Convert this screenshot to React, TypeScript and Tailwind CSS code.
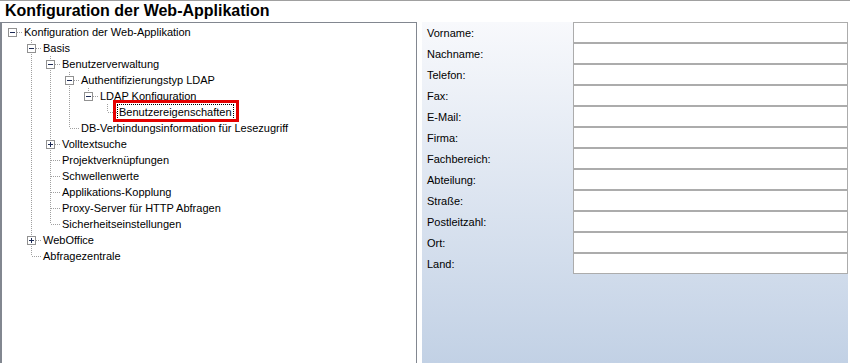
import React from "react";

type Node = { t: string; level: number; exp?: "-" | "+"; next: boolean; selected?: boolean };

const nodes: Node[] = [
  { t: "Konfiguration der Web-Applikation", level: 0, exp: "-", next: false },
  { t: "Basis", level: 1, exp: "-", next: true },
  { t: "Benutzerverwaltung", level: 2, exp: "-", next: true },
  { t: "Authentifizierungstyp LDAP", level: 3, exp: "-", next: true },
  { t: "LDAP Konfiguration", level: 4, exp: "-", next: false },
  { t: "Benutzereigenschaften", level: 5, next: false, selected: true },
  { t: "DB-Verbindungsinformation für Lesezugriff", level: 3, next: false },
  { t: "Volltextsuche", level: 2, exp: "+", next: true },
  { t: "Projektverknüpfungen", level: 2, next: true },
  { t: "Schwellenwerte", level: 2, next: true },
  { t: "Applikations-Kopplung", level: 2, next: true },
  { t: "Proxy-Server für HTTP Abfragen", level: 2, next: true },
  { t: "Sicherheitseinstellungen", level: 2, next: false },
  { t: "WebOffice", level: 1, exp: "+", next: true },
  { t: "Abfragezentrale", level: 1, next: false },
];

const fields = [
  "Vorname:",
  "Nachname:",
  "Telefon:",
  "Fax:",
  "E-Mail:",
  "Firma:",
  "Fachbereich:",
  "Abteilung:",
  "Straße:",
  "Postleitzahl:",
  "Ort:",
  "Land:",
];

const vDots =
  "bg-[repeating-linear-gradient(to_bottom,#a0a0a0_0px,#a0a0a0_1px,transparent_1px,transparent_2px)]";
const hDots =
  "bg-[repeating-linear-gradient(to_right,#a0a0a0_0px,#a0a0a0_1px,transparent_1px,transparent_2px)]";

function Expander({ kind }: { kind: "-" | "+" }) {
  return (
    <div className="absolute left-[5px] top-[4px] w-[9px] h-[9px] border border-[#919191] bg-white">
      <div className="absolute left-[1px] top-[3px] w-[5px] h-[1px] bg-[#1c2a55]" />
      {kind === "+" && <div className="absolute left-[3px] top-[1px] w-[1px] h-[5px] bg-[#1c2a55]" />}
    </div>
  );
}

function Tree() {
  const cont: boolean[] = [];
  return (
    <div className="flex flex-col pt-[1px]">
      {nodes.map((n, i) => {
        cont[n.level] = n.next;
        const cells = [];
        for (let k = 0; k < n.level; k++) {
          const show = k > 0 && cont[k];
          cells.push(
            <div key={k} className="relative w-[19px] h-[16px] shrink-0">
              {show && <div className={`absolute left-[9px] top-0 w-[1px] h-[16px] ${vDots}`} />}
            </div>
          );
        }
        return (
          <div key={i} className="flex h-[16px] items-center">
            {cells}
            <div className="relative w-[19px] h-[16px] shrink-0">
              {n.level > 0 && (
                <div
                  className={`absolute left-[9px] top-0 w-[1px] ${n.next ? "h-[16px]" : "h-[8px]"} ${vDots}`}
                />
              )}
              <div className={`absolute left-[10px] top-[8px] w-[9px] h-[1px] ${hDots}`} />
              {n.exp && <Expander kind={n.exp} />}
            </div>
            <div className="relative">
              {n.selected ? (
                <div className="relative">
                  <div className="px-[2px] h-[16px] leading-[16px] whitespace-nowrap outline-1 outline-dotted outline-black -outline-offset-1">
                    {n.t}
                  </div>
                  <div className="absolute -left-[4px] -right-[5px] -top-[4px] -bottom-[2px] border-[3px] border-[#e50000]" />
                </div>
              ) : (
                <div className="px-[2px] h-[16px] leading-[16px] whitespace-nowrap">{n.t}</div>
              )}
            </div>
          </div>
        );
      })}
    </div>
  );
}

export default function App() {
  return (
    <div
      className="w-[850px] h-[363px] bg-white overflow-hidden flex flex-col text-[11px] text-black"
      style={{ fontFamily: '"Liberation Sans", Arial, sans-serif' }}
    >
      <div className="h-[22px] shrink-0 border-t border-[#a0a0a0] pl-[5px] text-[16px] font-bold leading-[19px]">
        Konfiguration der Web-Applikation
      </div>
      <div className="flex flex-1 min-h-0">
        <div className="w-[417px] shrink-0 border-t border-l-2 border-r border-[#828790] pl-[1px]">
          <Tree />
        </div>
        <div className="w-[426px] ml-[5px] shrink-0 h-[341px] bg-gradient-to-b from-[#f8f9fc] to-[#c2d1e5]">
          <div className="flex flex-col">
            {fields.map((f) => (
              <div key={f} className="flex h-[21px] items-center">
                <div className="w-[151px] pl-[5px] pt-[2px] shrink-0">{f}</div>
                <div className="w-[275px] h-[21px] border border-[#acacac] bg-white" />
              </div>
            ))}
          </div>
        </div>
      </div>
    </div>
  );
}
